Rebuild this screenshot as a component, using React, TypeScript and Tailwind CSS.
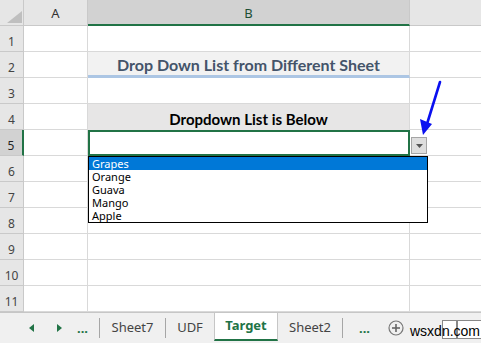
import React from "react";

const rows = [1, 2, 3, 4, 5, 6, 7, 8, 9, 10, 11];

function RowHeader({ n }: { n: number }) {
  const sel = n === 5;
  return (
    <div
      className={
        "w-[24px] h-full flex items-end justify-center pb-[3px] text-[12px] leading-none border-b border-[#c9c9c9] " +
        (sel
          ? "bg-[#d2d2d2] border-r-2 border-r-[#217346] text-[#222]"
          : "bg-[#e6e6e6] border-r border-r-[#c9c9c9] text-[#444]")
      }
      style={{ fontFamily: "'Noto Sans', 'Open Sans', sans-serif" }}
    >
      {n}
    </div>
  );
}

function BCell({ n }: { n: number }) {
  if (n === 2)
    return (
      <div className="w-[322px] h-full bg-[#f2f2f2] border-b-[3px] border-[#acc6e4] border-r border-r-[#d9d9d9] flex items-center justify-center pt-[2px]">
        <span
          className="text-[16px] font-bold text-[#44546a]"
          style={{ fontFamily: "Lato, 'Open Sans', sans-serif" }}
        >
          Drop Down List from Different Sheet
        </span>
      </div>
    );
  if (n === 4)
    return (
      <div className="w-[322px] h-full bg-[#e7e6e6] border-r border-[#d9d9d9] flex items-end justify-center pb-[3px]">
        <span
          className="text-[15px] font-bold text-black leading-none"
          style={{ fontFamily: "Lato, 'Open Sans', sans-serif" }}
        >
          Dropdown List is Below
        </span>
      </div>
    );
  if (n === 5)
    return <div className="w-[322px] h-full border-2 border-[#217346] bg-white" />;
  return <div className="w-[322px] h-full border-r border-b border-[#d9d9d9]" />;
}

export default function App() {
  return (
    <div className="relative w-[481px] h-[343px] bg-white overflow-hidden select-none">
      {/* column header */}
      <div className="flex h-[26px]">
        <div className="relative w-[24px] h-full bg-[#e6e6e6] border-r border-b border-[#c9c9c9]">
          <svg className="absolute left-0 top-0" width="24" height="26">
            <polygon points="7,23 22,23 22,11" fill="#bfbfbf" />
          </svg>
        </div>
        <div
          className="w-[64px] h-full bg-[#e6e6e6] border-r border-b border-[#c9c9c9] flex items-center justify-center pt-[3px] text-[13px] text-[#333]"
          style={{ fontFamily: "'Noto Sans', 'Open Sans', sans-serif" }}
        >
          A
        </div>
        <div
          className="w-[322px] h-full bg-[#d2d2d2] border-r border-[#c9c9c9] border-b-2 border-b-[#217346] flex items-center justify-center pt-[3px] text-[13px] text-[#1e4f35]"
          style={{ fontFamily: "'Noto Sans', 'Open Sans', sans-serif" }}
        >
          B
        </div>
        <div className="flex-1 h-full bg-[#e6e6e6] border-b border-[#c9c9c9]" />
      </div>
      {rows.map((n) => (
        <div key={n} className="flex h-[26px]">
          <RowHeader n={n} />
          <div className="w-[64px] h-full border-r border-b border-[#d9d9d9]" />
          <BCell n={n} />
          <div className="flex-1 h-full border-b border-[#d9d9d9]" />
        </div>
      ))}

      {/* sheet tabs bar */}
      <div
        className="absolute left-0 right-0 bottom-0 h-[31px] bg-[#f0f0f0] border-t border-[#c6c6c6] flex items-stretch text-[13px] text-[#444]"
        style={{ fontFamily: "'Noto Sans', 'Open Sans', sans-serif" }}
      >
        <div className="w-[24px]" />
        <div className="w-[14px] flex items-center justify-center">
          <svg width="5" height="8"><polygon points="5,0 5,8 0,4" fill="#217346" /></svg>
        </div>
        <div className="w-[14px]" />
        <div className="w-[14px] flex items-center justify-center">
          <svg width="5" height="8"><polygon points="0,0 0,8 5,4" fill="#217346" /></svg>
        </div>
        <div className="w-[33px] flex items-center justify-center font-bold text-[#217346] pt-[2px]">
          ...
        </div>
        <div className="w-px my-[5px] bg-[#a6a6a6]" />
        <div className="w-[65px] flex items-center justify-center">Sheet7</div>
        <div className="w-px my-[5px] bg-[#a6a6a6]" />
        <div className="w-[48px] flex items-center justify-center">UDF</div>
        <div className="w-[64px] bg-white border-l border-r border-[#c6c6c6] border-b-2 border-b-[#217346] mb-[2px] flex items-center justify-center font-bold text-[#217346]">
          Target
        </div>
        <div className="w-[64px] flex items-center justify-center">Sheet2</div>
        <div className="w-px my-[5px] bg-[#a6a6a6]" />
        <div className="w-[43px] flex items-center justify-center font-bold text-[#217346] pt-[2px]">
          ...
        </div>
        <div className="w-[20px] flex items-center justify-center">
          <svg width="16" height="16" viewBox="0 0 16 16">
            <circle cx="8" cy="8" r="7" fill="none" stroke="#777" strokeWidth="1.2" />
            <line x1="8" y1="4" x2="8" y2="12" stroke="#666" strokeWidth="1.6" />
            <line x1="4" y1="8" x2="12" y2="8" stroke="#666" strokeWidth="1.6" />
          </svg>
        </div>
        <div className="relative flex-1">
          <div className="absolute left-[36px] top-[7px] w-[15px] h-[19px] border border-[#888] bg-white" />
          <div className="absolute left-[51px] top-[7px] w-[24px] h-[19px] border-l border-t border-b border-[#888] bg-white" />
          <span
            className="absolute left-[4px] top-[11px] text-[14px] leading-none text-black"
            style={{ fontFamily: "'Liberation Sans', Arial, sans-serif" }}
          >
            wsxdn.com
          </span>
        </div>
      </div>

      {/* dropdown button */}
      <div className="absolute left-[411px] top-[137px] w-[16px] h-[17px] bg-[#dedede] border border-[#a5a5a5] flex items-center justify-center">
        <svg width="7" height="4"><polygon points="0,0 7,0 3.5,4" fill="#555" /></svg>
      </div>

      {/* dropdown list */}
      <div
        className="absolute left-[88px] top-[156px] w-[340px] h-[67px] bg-white border border-black text-[11px] leading-[13px] text-black"
        style={{ fontFamily: "'Noto Sans', 'Open Sans', sans-serif" }}
      >
        <div className="h-[13px] bg-[#0078d7] text-white pl-[3px]">Grapes</div>
        <div className="h-[13px] pl-[3px]">Orange</div>
        <div className="h-[13px] pl-[3px]">Guava</div>
        <div className="h-[13px] pl-[3px]">Mango</div>
        <div className="h-[13px] pl-[3px]">Apple</div>
      </div>

      {/* blue annotation arrow */}
      <svg className="absolute left-0 top-0 pointer-events-none" width="481" height="343">
        <line x1="440" y1="82" x2="427" y2="124" stroke="#0a10f0" strokeWidth="2.6" strokeLinecap="round" />
        <polygon points="420,119 432,124 423,135" fill="#0a10f0" />
      </svg>
    </div>
  );
}
